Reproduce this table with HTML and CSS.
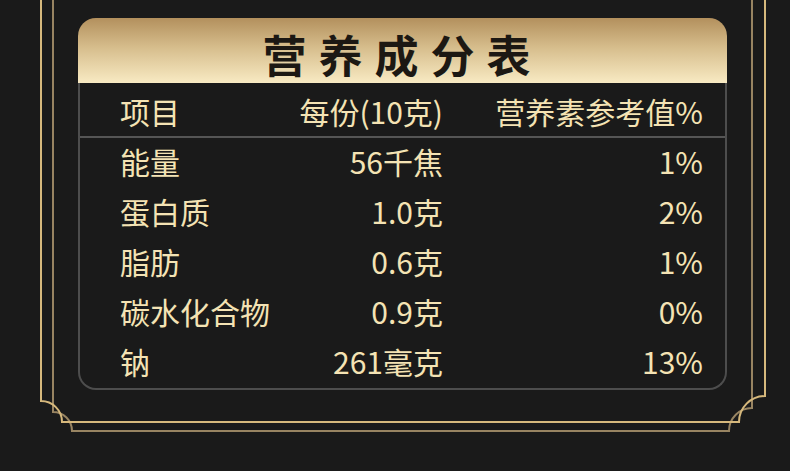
FILE: index.html
```html
<!DOCTYPE html>
<html lang="zh-CN">
<head>
<meta charset="utf-8">
<title>营养成分表</title>
<link rel="stylesheet" href="styles.css">
</head>
<body>
<div class="page">
  <svg class="frame" width="790" height="471" viewBox="0 0 790 471" aria-hidden="true">
    <path class="frame-dark" d="M53,0 V412 A19,19 0 0 1 72,431 H729 A23,23 0 0 1 752,408 V0" />
    <path class="frame-bright" d="M41,0 V401 A21,21 0 0 1 62,422 H739 A26,26 0 0 1 765,396 V0" />
  </svg>
  <div class="card">
    <div class="card-head">
      <h1 class="title">营养成分表</h1>
    </div>
    <div class="card-body">
      <div class="row row-head">
        <span class="c1">项目</span>
        <span class="c2">每份(10克)</span>
        <span class="c3">营养素参考值%</span>
      </div>
      <div class="row">
        <span class="c1">能量</span>
        <span class="c2">56千焦</span>
        <span class="c3">1%</span>
      </div>
      <div class="row">
        <span class="c1">蛋白质</span>
        <span class="c2">1.0克</span>
        <span class="c3">2%</span>
      </div>
      <div class="row">
        <span class="c1">脂肪</span>
        <span class="c2">0.6克</span>
        <span class="c3">1%</span>
      </div>
      <div class="row">
        <span class="c1">碳水化合物</span>
        <span class="c2">0.9克</span>
        <span class="c3">0%</span>
      </div>
      <div class="row">
        <span class="c1">钠</span>
        <span class="c2">261毫克</span>
        <span class="c3">13%</span>
      </div>
    </div>
  </div>
</div>
</body>
</html>
```

FILE: styles.css
```css
html, body {
  margin: 0;
  padding: 0;
  background: #1a1a1a;
}

.page {
  position: relative;
  width: 790px;
  height: 471px;
  overflow: hidden;
  padding: 18px 0 0 78px;
  box-sizing: border-box;
  font-family: "Noto Sans CJK SC", "Noto Sans", sans-serif;
}

.frame {
  position: absolute;
  left: 0;
  top: 0;
  pointer-events: none;
}

.frame path {
  fill: none;
  stroke-width: 2;
}

.frame-bright {
  stroke: #d6b87c;
}

.frame-dark {
  stroke: #988462;
}

.card {
  position: relative;
  width: 649px;
}

.card-head {
  height: 65px;
  border-radius: 18px 18px 0 0;
  background: linear-gradient(180deg, #b3905d 0%, #d6bd8c 45%, #f8eac3 100%);
  display: flex;
  align-items: center;
  justify-content: center;
  padding-top: 6px;
  box-sizing: border-box;
}

.title {
  margin: 0;
  font-size: 44px;
  line-height: 1;
  font-weight: 700;
  letter-spacing: 12px;
  color: #1c1813;
}

.card-body {
  border: 2px solid #4d4d4d;
  border-top: none;
  border-radius: 0 0 18px 18px;
}

.row {
  display: grid;
  grid-template-columns: 160px 163px 260px;
  align-items: center;
  height: 50px;
  padding: 0 0 4px 40px;
  box-sizing: border-box;
  font-size: 30px;
  font-weight: 400;
  line-height: 1;
  color: #f4e3b4;
}

.row-head {
  height: 55px;
  padding: 3px 0 0 40px;
  border-bottom: 2px solid #555555;
}

.c2, .c3 {
  text-align: right;
  white-space: nowrap;
}

.c1 {
  white-space: nowrap;
}
```
